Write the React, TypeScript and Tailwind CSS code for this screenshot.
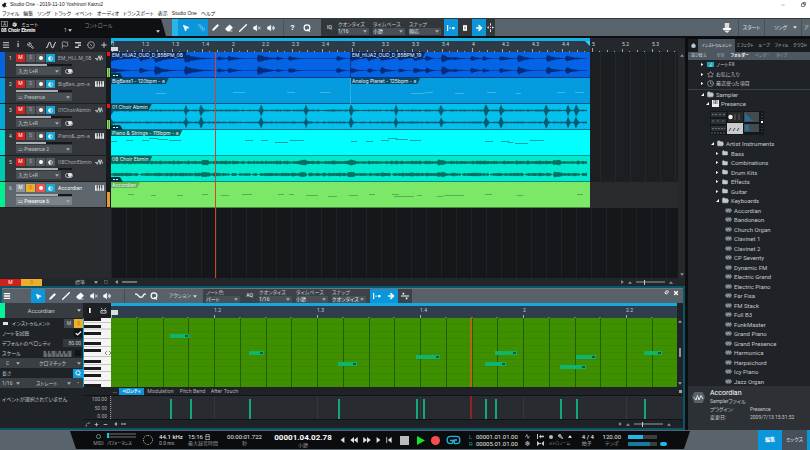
import type { ReactNode } from "react";
import {
  Menu, Wrench, Clock, Plus, MousePointer2, Pencil, Eraser, Slash, VolumeX, Volume2,
  ArrowRight, Home, Star, Folder, FolderOpen, Pin, X, Activity, Flag, Check, Hand,
  SquareStack, CircleSlash, Spline, Minus, Square, Copy, Music2, Settings,
} from "lucide-react";
import clsx from "clsx";

const NOTE_BEAT = 103;
const SONG_WIDTH = 479;

type Wave = "oud" | "choir" | "dense" | "midi";

interface Clip {
  label: string;
  start: number;
}

interface Track {
  name: string;
  input: string;
  audio: boolean;
  level: number;
  strip: string;
  lane: string;
  tag: string;
  ink: string;
  wave: Wave;
  clips: Clip[];
  notes?: number[][];
  meter?: "green" | "orange";
  monitor?: boolean;
  active?: boolean;
}

const TRACKS: Track[] = [
  {
    name: "EM_HIJ..M_08", input: "入力 L+R", audio: true, level: 55, strip: "bg-[#0563e0]", lane: "bg-[#0563e6]", tag: "bg-[#08265f]",
    ink: "#062c78", wave: "oud", meter: "green", monitor: true,
    clips: [{ label: "EM_HIJAZ_OUD_D_85BPM_08", start: 0 }, { label: "EM_HIJAZ_OUD_D_85BPM_19", start: 240 }],
  },
  {
    name: "BigBas..pm-a", input: "Presence", audio: false, level: 75, strip: "bg-[#039adf]", lane: "bg-[#049bdf]", tag: "bg-[#064a68]",
    ink: "#3fb6e6", wave: "midi", monitor: true,
    clips: [{ label: "BigBass1 - 120bpm - a", start: 0 }, { label: "Analog Planet - 125bpm - a", start: 240 }],
    notes: [[45, 16, 10], [122, 15, 12], [176, 15, 8], [209, 15, 10], [300, 16, 14], [314, 15, 8], [344, 16, 9], [376, 15, 9], [405, 16, 5], [446, 15, 8], [464, 15, 9]],
  },
  {
    name: "01ChoirAbmin", input: "入力 L+R", audio: true, level: 62, strip: "bg-[#05a8d8]", lane: "bg-[#04c0ec]", tag: "bg-[#074a5c]",
    ink: "#075a70", wave: "choir", meter: "green", monitor: true,
    clips: [{ label: "01 Choir Abmin", start: 0 }],
  },
  {
    name: "Piano&..pm-a", input: "Presence 2", audio: false, level: 54, strip: "bg-[#00d8d0]", lane: "bg-[#00ffff]", tag: "bg-[#07696c]",
    ink: "#10a0a2", wave: "midi", monitor: true,
    clips: [{ label: "Piano & Strings - 115bpm - a", start: 0 }],
    notes: [[0, 12, 6], [15, 11, 7], [31, 11, 7], [38, 9, 9], [47, 10, 10], [58, 11, 12], [134, 11, 8], [150, 11, 7], [164, 13, 13], [179, 11, 14], [240, 12, 6], [255, 12, 7], [270, 11, 8], [277, 9, 9], [285, 10, 12], [299, 11, 11], [374, 12, 8], [390, 12, 8], [397, 13, 5], [404, 14, 13], [419, 11, 14]],
  },
  {
    name: "08ChoirEbmin", input: "入力 L+R", audio: true, level: 75, strip: "bg-[#00c8ae]", lane: "bg-[#00ead0]", tag: "bg-[#07695e]",
    ink: "#07705f", wave: "dense",
    clips: [{ label: "08 Choir Ebmin", start: 0 }],
  },
  {
    name: "Accordian", input: "Presence 6", audio: false, level: 75, strip: "bg-[#00f090]", lane: "bg-[#7be868]", tag: "bg-[#62b556]",
    ink: "#58ad50", wave: "midi", meter: "orange", active: true, monitor: true,
    clips: [{ label: "Accordian", start: 0 }],
    notes: [[17, 13, 6], [40, 14, 5], [66, 14, 6], [91, 13, 6], [110, 14, 8], [131, 13, 10], [167, 13, 6], [178, 13, 5], [195, 14, 12], [217, 15, 9], [238, 14, 9], [258, 13, 6], [281, 13, 7], [283, 15, 20], [306, 14, 5], [326, 15, 6], [333, 14, 20], [374, 13, 7], [406, 14, 6], [466, 13, 6]],
  },
];

const OUD_HITS = [[0, 3.5, 9], [30, 4, 4], [45, 5, 8], [75, 5, 10], [108, 2.5, 5], [118, 3, 7], [148, 5, 8], [167, 2, 4], [179, 3, 6], [227, 3, 4], [241, 3, 6], [258, 3, 4], [271, 3.5, 6], [289, 2.5, 4], [304, 3, 6], [316, 3, 4], [332, 5, 6], [344, 2, 6], [361, 3, 5], [373, 2.5, 4], [390, 3, 6], [408, 4.5, 6], [437, 4, 7], [456, 4, 7]];
const CHOIR_HITS = [[0, 7, 1.5], [75, 10, 1], [90, 10, 1.4], [150, 10, 1.2], [195, 10, 1], [240, 10, 1.2], [285, 10, 1], [330, 8, 1.4], [375, 10, 1.4], [390, 10, 1.4], [435, 10, 1.4], [457, 10, 1.2], [465, 10, 1.4]];

function noise(x: number, seed: number) {
  const v = Math.sin(x * 12.9898 + seed * 78.233) * 43758.5453;
  return v - Math.floor(v);
}

function amplitude(wave: Wave, x: number, seed: number) {
  const n = noise(x, seed);
  if (wave === "dense") {
    const swell = [94, 192, 240, 330, 446].some((s) => Math.abs(x - s) < 4) ? 1 : 0;
    const gap = seed === 2 && noise(Math.floor(x / 7), 9) < 0.25 && x % 7 < 2;
    return gap ? 0.3 : 0.8 + n * 1.1 + swell;
  }
  const hits = wave === "oud" ? OUD_HITS : CHOIR_HITS;
  let amp = wave === "oud" ? 0.3 : 0.5 + n * 0.5;
  for (const [at, peak, decay] of hits) {
    const d = x - at;
    if (d >= -1 && d < decay * 3) amp = Math.max(amp, peak * Math.exp(-Math.abs(d) / decay) * (0.6 + n * 0.4));
  }
  return Math.min(amp, 6);
}

function wavePath(wave: Wave, mid: number, seed: number) {
  const top: string[] = [];
  const bottom: string[] = [];
  for (let x = 0; x <= SONG_WIDTH - 3; x++) {
    const a = amplitude(wave, x, seed);
    top.push(`${x},${(mid - a).toFixed(1)}`);
    bottom.unshift(`${x},${(mid + a).toFixed(1)}`);
  }
  return `M${top.join("L")}L${bottom.join("L")}Z`;
}

function Caret({ className }: { className?: string }) {
  return (
    <svg viewBox="0 0 6 4" className={clsx("h-[3px] w-[4px] shrink-0 fill-current", className)} aria-hidden>
      <path d="M0 0h6L3 4z" />
    </svg>
  );
}

function QuantizeIcon({ className = "size-[8px]" }: { className?: string }) {
  return (
    <svg viewBox="0 0 10 10" className={className} fill="none" stroke="currentColor" strokeWidth="1.500" aria-hidden>
      <circle cx="5" cy="4.800" r="3.600" />
      <path d="M5.500 6.500L8.500 9.500" />
    </svg>
  );
}

function Picker({ label, options, className }: { label: string; options: string[]; className?: string }) {
  return (
    <span className={clsx("flex min-w-0 items-center", className)}>
      <select aria-label={label} className="h-[7px] min-w-0 flex-1 appearance-none truncate bg-transparent leading-[7px] outline-none">
        {options.map((o) => <option key={o}>{o}</option>)}
      </select>
      <Caret className="mr-[2px] text-[#a9b0b5]" />
    </span>
  );
}

function LabeledPicker({ title, value, className }: { title: string; value: string; className?: string }) {
  return (
    <div className={clsx("flex shrink-0 flex-col justify-center text-[5px] leading-[7px] text-[#c3c8cc]", className)}>
      <span className="whitespace-nowrap">{title}</span>
      <Picker label={title} options={[value]} className="bg-[#4a5056] text-[#dde1e4]" />
    </div>
  );
}

function Tool({ label, active, className, children }: { label: string; active?: boolean; className?: string; children: ReactNode }) {
  return (
    <button aria-label={label} className={clsx("flex h-full shrink-0 items-center justify-center text-white", active && "bg-[#0b96dc]", className)}>
      {children}
    </button>
  );
}

function SnapIcon() {
  return (
    <svg viewBox="0 0 8 6" className="h-[6px] w-[8px] fill-white" aria-hidden>
      <path d="M0 0h1.200v6H0zM2.500 2.500h1.200v1.200H2.500zM5 2h2.500v2.200H5z" />
    </svg>
  );
}

function WindowHeader() {
  const items = ["ファイル", "編集", "ソング", "トラック", "イベント", "オーディオ", "トランスポート", "表示", "Studio One", "ヘルプ"];
  return (
    <header className="h-[18px] bg-white font-['Liberation_Sans','Noto_Sans_CJK_JP',sans-serif] text-[5px] leading-[9px] text-[#222]">
      <div className="flex h-[9px] items-center gap-[3px] pl-px">
        <svg viewBox="0 0 12 12" className="size-[6px]" aria-hidden><path d="M1 3l3 2 3-4 4 2-2 3 3 4-4-1-2 3-2-4-3 1 2-3z" fill="#111" /></svg>
        <h1>Studio One - 2019-11-10 Yoshinori Kaizu2</h1>
        <div className="ml-auto flex gap-[16px] pr-[4px]">
          <button aria-label="最小化" className="w-[4px]"><Minus size={4} /></button>
          <button aria-label="元に戻す"><Copy size={5} strokeWidth={3} className="-scale-x-100" /></button>
        </div>
      </div>
      <nav className="flex h-[9px] items-center gap-[4px] pl-[2px]">
        {items.map((m) => <button key={m} className="whitespace-nowrap">{m}</button>)}
      </nav>
    </header>
  );
}

function MainToolbar() {
  return (
    <div className="flex h-[18px] items-stretch overflow-hidden border-t border-[#33383c] bg-[#5a646c]">
      <div className="flex w-[166px] shrink-0 bg-[#0e1013] text-[5px] text-[#d5d8da] [clip-path:polygon(0_0,97%_0,100%_100%,0_100%)]">
        <div className="w-[64px] pl-px pt-[2px] leading-[6px]">
          <div className="flex items-center gap-[4px]">
            <span className="border border-[#777] px-px leading-[4px]">A</span><Hand size={5} fill="currentColor" />ミュート
          </div>
          <div className="truncate font-bold text-white">08 Choir Ebmin</div>
        </div>
        <div className="flex items-end gap-px pb-[2px] leading-[7px]">1<Caret className="mb-[2px]" /></div>
        <span className="pl-[13px] pt-[2px] leading-[8px] text-[#8b9095]">コントロール</span>
        <Caret className="ml-auto mr-[6px] mt-[11px]" />
      </div>
      <div className="ml-[6px] flex">
        <span className="w-[6px] bg-[#29b4ea]" />
        <Tool label="矢印" active className="w-[16px]"><MousePointer2 size={8} fill="white" className="-scale-100 rotate-180" /></Tool>
        <Tool label="範囲" active className="w-[14px]"><SquareStack size={7} className="text-[#9bd6f2]" /></Tool>
        <Tool label="ペイント" className="w-[14px]"><Pencil size={7} fill="white" /></Tool>
        <Tool label="消しゴム" className="w-[14px]"><Eraser size={8} fill="white" /></Tool>
        <Tool label="直線" className="w-[14px]"><Slash size={8} strokeWidth={4} /></Tool>
        <Tool label="ミュート" className="w-[14px]"><VolumeX size={8} fill="white" /></Tool>
        <Tool label="試聴" className="w-[14px]"><Volume2 size={8} fill="white" /></Tool>
      </div>
      <div className="ml-[5px] flex border-l border-[#4b545b]">
        <Tool label="ヘルプ" className="w-[17px] text-[8px] font-bold">?</Tool>
        <Tool label="検索" className="w-[12px]"><QuantizeIcon /></Tool>
      </div>
      <div className="ml-[8px] flex shrink-0 bg-[#32373c]">
        <Tool label="IQ" className="w-[17px] text-[5px] text-[#d0d4d7]">IQ</Tool>
        <LabeledPicker title="クオンタイズ" value="1/16" className="mr-[4px] w-[31px]" />
        <LabeledPicker title="タイムベース" value="小節" className="mr-[4px] w-[32px]" />
        <LabeledPicker title="スナップ" value="順応" className="w-[32px]" />
        <Tool label="スナップ切替" active className="ml-[3px] w-[14px]"><SnapIcon /></Tool>
        <Tool label="カーソル" className="w-[14px]"><svg viewBox="0 0 5 7" className="h-[6px] w-[4px]"><path d="M0 0h5v7H0z" fill="white" /><path d="M2 2h1v3H2z" fill="#32373c" /></svg></Tool>
        <Tool label="自動スクロール" active className="w-[14px]"><ArrowRight size={8} strokeWidth={5} /></Tool>
        <Tool label="分割" className="w-[9px]">
          <svg viewBox="0 0 8 10" className="h-[9px] w-[7px] fill-white"><path d="M3.500 0h1v3h-1zM3.500 7h1v3h-1zM3.500 4.500h1v1h-1zM0 5l2-1.500v3zM8 5l-2-1.500v3z" /></svg>
        </Tool>
      </div>
      <div className="ml-auto flex items-stretch text-[5px] leading-[17px] text-[#dfe3e6]">
        <button aria-label="ダウンロード" className="px-[6px]">
          <svg viewBox="0 0 18 18" className="size-[10px]"><path d="M5 0h8v9H5z" fill="#ddd" /><path d="M1 9h16l-2 4H3z" fill="white" /><path d="M4 14h10l-5 4z" fill="#e5e8ea" /></svg>
        </button>
        <button className="w-[26px] border-l border-[#495158]">スタート</button>
        <button className="flex w-[37px] items-center justify-between border-l border-[#495158] pl-[9px] pr-[4px]">ソング<Caret /></button>
        <button className="w-[9px] border-l border-[#495158] pl-[2px] text-left">ア</button>
      </div>
    </div>
  );
}

function Ruler() {
  const beats = Array.from({ length: 19 }, (_, i) => i);
  return (
    <div className="relative flex min-w-0 flex-1 overflow-hidden bg-[#24272b] text-[5px] leading-[5px] text-[#d5dade]">
      <div className="absolute inset-y-0 left-0 w-[479px] border-t-[3px] border-[#13b3e6] bg-[#2d3b48]" />
      {beats.map((b) => {
        const bar = Math.floor(b / 4) + 1;
        const inBar = b % 4;
        return (
          <div key={b} className="relative flex w-[30px] shrink-0 flex-col justify-between pl-px pt-[4px]">
            <span>{inBar ? `${bar}.${inBar + 1}` : bar}</span>
            <svg viewBox="0 0 29 4" className="h-[4px] w-[29px]" aria-hidden>
              <path d={`M.5 ${inBar ? 1 : 0}V4M7.500 3V4M15.500 2V4M22.500 3V4`} stroke="#9ba5ad" />
            </svg>
          </div>
        );
      })}
      <svg viewBox="0 0 479 14" className="absolute left-0 top-0 h-[14px] w-[479px]" aria-hidden>
        <path d="M0 3h3l-3 4zM479 3h-5l5 5z" fill="#26d4ff" />
        <path d="M0 9h7v4H0z" fill="#d8dde0" />
      </svg>
    </div>
  );
}

function TrackHeader({ track, index }: { track: Track; index: number }) {
  const cell = "flex h-[8px] w-[9px] items-center justify-center";
  return (
    <div className={clsx("flex w-[111px] shrink-0 border-b border-[#1c1e20] text-[5px]", track.active ? "bg-[#5d656d]" : "bg-[#33373b]")}>
      <span className={clsx("w-[5px]", track.strip)} />
      <span className="w-[11px] pt-[2px] text-center leading-[8px] text-[#d8dadc]">{index + 1}</span>
      <div className="flex w-[90px] flex-col justify-between py-[2px]">
        <div className="flex items-center gap-px">
          <button aria-label="ミュート" className={clsx(cell, track.active ? "bg-[#8e959b] text-white" : "bg-[#d0231e] text-white")}>M</button>
          <button aria-label="ソロ" className={clsx(cell, track.active ? "bg-[#efae2a] text-[#b67b10]" : "bg-[#55595d] text-[#a5a9ac]")}>S</button>
          <button aria-label="録音待機" className={clsx(cell, track.active ? "bg-[#f0524c]" : "bg-[#55595d]")}><i className="size-[4px] rounded-full bg-white" /></button>
          <button aria-label="モニター" className={clsx(cell, track.monitor ? "bg-[#13a7d4]" : "bg-[#55595d]")}>
            <svg viewBox="0 0 6 6" className="size-[5px]"><circle cx="3" cy="3" r="2.400" fill="none" stroke="white" strokeWidth=".7" /><path d="M3 .6a2.400 2.400 0 0 0 0 4.800z" fill="white" /></svg>
          </button>
          <span className={clsx("ml-[2px] w-[36px] whitespace-nowrap font-['Inter',sans-serif] leading-[8px]", track.active ? "text-white" : "text-[#a8acaf]")}>{track.name}</span>
          {track.audio ? (
            <svg viewBox="0 0 14 10" className="h-[6px] w-[8px] shrink-0" fill="none" stroke="#d0d3d5" strokeWidth="1.600"><path d="M0 7l2-2 2 4 3-8 2 8 2-8 2 7" /></svg>
          ) : (
            <svg viewBox="0 0 16 10" className="h-[6px] w-[9px] shrink-0"><path d="M0 0h16v10H0z" fill="#e4e6e8" /><path d="M3 0h2v6H3zM7 0h2v6H7zM11 0h2v6h-2z" fill="#33373b" /><path d="M4 6v4M8 6v4M12 6v4" stroke="#33373b" /></svg>
          )}
        </div>
        <input
          type="range" aria-label={`${track.name} 音量`} defaultValue={track.level}
          className="h-[2px] w-[56px] appearance-none [&::-webkit-slider-thumb]:size-0 [&::-webkit-slider-thumb]:appearance-none"
          style={{ background: `linear-gradient(90deg, #a8adb0 ${track.level}%, #15171a ${track.level}%)` }}
        />
        <div className="flex items-center gap-[4px]">
          <Picker
            label={`${track.name} 入力`}
            options={[track.audio ? track.input : `▭ ${track.input}`]}
            className={clsx("h-[8px] pl-[2px]", track.audio ? "w-[45px]" : "w-[56px]", track.active ? "bg-[#7c848b] text-white" : "bg-[#4a4f54] text-[#bfc3c6]")}
          />
          {track.audio && <button aria-label="ステレオ" className="flex h-[5px] w-[8px] items-center justify-end rounded-full border border-[#b5b8ba]"><i className="size-[4px] rounded-full bg-[#e5e7e9]" /></button>}
        </div>
      </div>
      <div className="flex w-[5px] flex-col justify-between bg-[#181b1e] px-px">
        <span className={clsx("h-[4px]", track.meter === "green" && "bg-[#ee1512]")} />
        {track.meter === "green" && <span className="h-[9px] border-x border-[#8ae056] bg-[#55a23a]" />}
        {track.meter === "orange" && <span className="h-[15px] bg-[#ea9a2e]" />}
      </div>
    </div>
  );
}

function TrackLane({ track }: { track: Track }) {
  return (
    <div className={clsx("min-w-0 flex-1 overflow-hidden", track.active && "bg-[#292b2f]")}>
      <div className={clsx("relative h-[26px] w-[479px] border-b border-black/40", track.lane)}>
        <svg viewBox="0 0 479 26" className="absolute inset-0 h-[26px] w-[479px]" aria-hidden>
          {track.wave !== "midi" && (
            <>
              <path d={wavePath(track.wave, 6.5, 1)} fill={track.ink} />
              <path d={wavePath(track.wave, 18.5, 2)} fill={track.ink} />
            </>
          )}
          {track.clips.slice(1).map((c) => <path key={c.start} d={`M${c.start - 0.5} 0v26`} stroke={track.ink} strokeOpacity=".7" />)}
          {track.notes?.map(([x, y, w], i) => <path key={i} d={`M${x} ${y - 0.5}h${w}`} stroke={track.ink} />)}
          {track.audio && <path d="M0 21h9l3 5H0z" fill="#06323f" />}
          {track.audio && <path d="M2 23.500h2m1 0h2" stroke="#cfe" strokeWidth="1" />}
        </svg>
        {track.clips.map((c) => (
          <span
            key={c.start}
            className={clsx("absolute top-0 whitespace-nowrap pl-px pr-[4px] text-[5px] leading-[6px] text-[#e8f6fa] font-['Inter',sans-serif] [clip-path:polygon(0_0,100%_0,calc(100%-3px)_100%,0_100%)]", track.tag)}
            style={{ left: c.start }}
          >
            {c.label}
          </span>
        ))}
      </div>
    </div>
  );
}

function ZoomSlider() {
  return (
    <div className="flex items-center gap-[4px] text-[#8b9095]">
      <svg viewBox="0 0 4 6" className="h-[4px] w-[3px] fill-current"><path d="M0 0l4 3-4 3z" /></svg>
      <Caret className="rotate-180" />
      <input type="range" aria-label="ズーム" defaultValue={30} className="h-[2px] w-[29px] appearance-none bg-[#5b6065] [&::-webkit-slider-thumb]:h-[5px] [&::-webkit-slider-thumb]:w-px [&::-webkit-slider-thumb]:appearance-none [&::-webkit-slider-thumb]:bg-[#c5c9cc]" />
      <Caret className="rotate-180" />
    </div>
  );
}

function Arrangement() {
  return (
    <section className="flex flex-1 flex-col bg-[#1b1e21]">
      <div className="flex h-[14px]">
        <div className="flex w-[111px] shrink-0 items-center bg-[#202327] text-[#c3c8cb]">
          <button aria-label="メニュー" className="flex w-[12px] justify-center"><Menu size={8} strokeWidth={3} /></button>
          <button aria-label="情報" className="flex w-[12px] justify-center text-[8px] font-bold leading-[8px]">i</button>
          <button aria-label="設定" className="flex w-[13px] justify-center"><Wrench size={7} strokeWidth={3} className="-scale-x-100" /></button>
          <div className="ml-auto flex gap-[5px] pr-[3px]">
            <button aria-label="オートメーション">
              <svg viewBox="0 0 12 8" className="h-[8px] w-[11px]" fill="none" stroke="currentColor" strokeWidth="1.200"><path d="M1 7c3 0 2-6 4-6s1 6 3 6 2-6 4-6" /></svg>
            </button>
            <button aria-label="マーカー"><Flag size={8} /></button>
            <button aria-label="アレンジ">
              <svg viewBox="0 0 8 8" className="size-[8px] fill-current"><path d="M1 1h6v1.500H1zM4 3.500h3V5H4zM1 5.500h4V7H1z" /></svg>
            </button>
            <button aria-label="テンポ"><CircleSlash size={8} className="-scale-x-100" /></button>
            <button aria-label="トラックを追加"><Plus size={8} strokeWidth={3} /></button>
          </div>
        </div>
        <Ruler />
        <div className="w-[6px] bg-[#24272b]" />
      </div>
      <div className="flex flex-1">
        <div className="relative flex min-w-0 flex-1 flex-col">
          {TRACKS.map((t, i) => (
            <div key={t.name} className="flex h-[26px] bg-[repeating-linear-gradient(90deg,#24272b_0,#24272b_1px,#1b1f22_1px,#1b1f22_15px)]">
              <TrackHeader track={t} index={i} />
              <TrackLane track={t} />
            </div>
          ))}
          <div className="flex flex-1">
            <div className="w-[111px] bg-[#27292d]" />
            <div className="flex-1 bg-[repeating-linear-gradient(90deg,#1e2125_0,#1e2125_1px,#15181b_1px,#15181b_15px)]" />
          </div>
          <div className="absolute inset-y-0 left-[215px] w-px bg-[#d8402c]" />
        </div>
        <div className="flex w-[7px] flex-col items-center justify-between bg-[#26282c] py-[2px] text-[#8b9095]">
          <Caret className="rotate-180" />
          <Caret />
        </div>
      </div>
      <div className="flex h-[8px] items-center bg-[#222529] text-[5px] leading-[8px] text-[#a4a9ad]">
        <button className="h-[7px] w-[21px] bg-[#cf201c] leading-[7px] text-white">M</button>
        <button className="h-[7px] w-[21px] bg-[#eeae2c] leading-[7px] text-[#b67b10]">S</button>
        <Picker label="トラック高さ" options={["標準"]} className="ml-[33px] w-[25px]" />
        <Square size={4} className="ml-[4px]" />
        <svg viewBox="0 0 4 6" className="ml-[7px] h-[4px] w-[3px] fill-current"><path d="M4 0v6L0 3z" /></svg>
        <span className="ml-[4px] h-[2px] w-[15px] bg-[#6d7276]" />
        <div className="ml-auto pr-[12px]"><ZoomSlider /></div>
      </div>
    </section>
  );
}

const NOTES = [[59, 18, 19], [138, 35, 15], [227, 46, 19], [305, 39, 24], [374, 46, 21], [384, 35, 22], [449, 49, 26], [465, 39, 20], [533, 35, 18]];
const VELOCITIES = [59, 79, 138, 227, 305, 312, 374, 384, 449, 465, 533];
const BLACK_KEYS = [0, 7, 14, 24, 31, 42, 49, 56, 66];

function InstrumentPanel() {
  return (
    <aside className="flex w-[83px] shrink-0 flex-col bg-[#1f2226] text-[5px] leading-[9px] text-[#c5c9cc]">
      <div className="flex h-[15px] items-center bg-[#373c41]">
        <span className="h-full w-[5px] bg-[#00f59a]" />
        <select aria-label="インストゥルメント選択" className="min-w-0 flex-1 appearance-none bg-transparent text-center text-[6px] outline-none"><option>Accordian</option></select>
        <Caret className="mr-[2px]" />
      </div>
      <div className="flex h-[10px] items-center pl-[3px]">
        <span className="h-[3px] w-[5px] bg-[#dfe2e4]" /><span className="ml-[4px]">インストゥルメント</span>
        <button className="ml-auto w-[10px] bg-[#43484d]">M</button>
        <button className="w-[9px] bg-[#efb02c] text-[#a8740f]">S</button>
      </div>
      <label className="flex h-[10px] items-center justify-between pl-[2px]">
        ノートを試聴
        <span className="relative mr-px flex size-[8px] items-center justify-center bg-[#121417]">
          <input type="checkbox" defaultChecked className="absolute inset-0 appearance-none" />
          <Check size={7} strokeWidth={4} className="text-white" />
        </span>
      </label>
      <label className="flex h-[10px] items-center justify-between pl-[2px]">
        <span className="whitespace-nowrap">デフォルトのベロシティ</span>
        <input defaultValue="80.00" className="h-[8px] w-[20px] bg-[#33383c] pr-[2px] text-right outline-none" />
      </label>
      <label className="flex h-[10px] items-center pl-[2px]">
        スケール
        <svg viewBox="0 0 32 8" className="ml-auto h-[7px] w-[31px]" aria-hidden>
          <path d="M0 1h32v7H0z" fill="#666b70" />
          <path d="M3 0h2v4H3zM7 0h2v4H7zM15 0h2v4h-2zM20 0h2v4h-2zM25 0h2v4h-2z" fill="#1f2226" />
          <path d="M4.500 4v4M9.500 4v4M14 1v7M18.500 4v4M23 4v4M28 1v7" stroke="#1f2226" strokeWidth=".7" />
        </svg>
        <input type="checkbox" className="mx-[2px] size-[6px] appearance-none bg-[#111316]" />
      </label>
      <div className="flex h-[10px] items-center bg-[#3a3f44] pl-[6px]">
        <Picker label="ルート" options={["C"]} className="w-[16px]" />
        <Picker label="スケール種類" options={["クロマチック"]} className="flex-1 pl-[17px]" />
      </div>
      <div className="flex h-[10px] items-center justify-between pl-[2px]">
        長さ<button aria-label="クオンタイズ長" className="flex h-[9px] w-[10px] items-center justify-center bg-[#0f9cdc] text-white"><QuantizeIcon className="size-[6px]" /></button>
      </div>
      <div className="flex h-[10px] items-center bg-[#3a3f44] pl-[2px]">
        <Picker label="長さ" options={["1/16"]} className="w-[20px]" />
        <Picker label="グリッド" options={["ストレート"]} className="w-[51px] pl-[14px]" />
        <span className="mx-auto">•</span>
      </div>
      <p className="whitespace-nowrap pl-[2px] pt-[7px]">イベントが選択されていません</p>
    </aside>
  );
}

function EditorToolbar() {
  return (
    <div className="flex h-[15px] items-stretch border-t border-[#6c757c] bg-[#58616a]">
      <Tool label="メニュー" className="w-[10px]"><Menu size={8} strokeWidth={4} /></Tool>
      <div className="ml-[19px] flex">
        <Tool label="矢印" active className="w-[14px]"><MousePointer2 size={7} fill="white" /></Tool>
        <Tool label="ペイント" className="w-[14px]"><Pencil size={7} fill="white" /></Tool>
        <Tool label="直線" className="w-[14px]"><Slash size={8} strokeWidth={4} /></Tool>
        <Tool label="消しゴム" className="w-[14px]"><Eraser size={8} fill="white" /></Tool>
        <Tool label="ミュート" className="w-[13px]"><VolumeX size={8} fill="white" /></Tool>
        <Tool label="試聴" className="w-[14px]"><Volume2 size={8} fill="white" /></Tool>
      </div>
      <div className="ml-[10px] flex border-l border-[#454d54] pl-[8px]">
        <Tool label="カーブ" className="w-[14px]"><svg viewBox="0 0 12 6" className="h-[6px] w-[11px]" fill="none" stroke="white" strokeWidth="1.400"><path d="M0 1h2l3 3 1 .5L8 4l2-3h2" /></svg></Tool>
        <Tool label="検索" className="w-[13px]"><QuantizeIcon /></Tool>
        <button className="flex w-[43px] items-center gap-[2px] pl-[9px] text-[5px] text-[#d5d9dc]">アクション<Caret /></button>
      </div>
      <div className="flex bg-[#3c4248] pl-[3px]">
        <LabeledPicker title="ノート色" value="パート" className="w-[34px]" />
        <Tool label="AQ" className="w-[19px] text-[5px] text-[#d0d4d7]">AQ</Tool>
        <LabeledPicker title="クオンタイズ" value="1/16" className="mr-[4px] w-[33px]" />
        <LabeledPicker title="タイムベース" value="小節" className="mr-[4px] w-[32px]" />
        <LabeledPicker title="スナップ" value="クオンタイズ" className="mr-[4px] w-[34px]" />
        <Tool label="スナップ切替" active className="w-[14px]"><SnapIcon /></Tool>
        <Tool label="自動スクロール" active className="w-[14px]"><ArrowRight size={8} strokeWidth={5} /></Tool>
        <Tool label="分割" className="w-[14px]"><svg viewBox="0 0 10 10" className="size-[8px] fill-white"><path d="M0 4.500h10v1H0zM2 1h2v2H2zM6 7h2v2H6z" /></svg></Tool>
      </div>
      <div className="ml-auto flex items-start gap-[4px] pr-[4px] pt-px text-white">
        <button aria-label="固定"><Pin size={5} strokeWidth={4} className="rotate-45" /></button>
        <button aria-label="閉じる"><X size={6} strokeWidth={5} /></button>
      </div>
    </div>
  );
}

function NoteEditor() {
  const labels = ["", "1.2", "1.3", "1.4", "2", "2.2"];
  const quarter = Array.from({ length: 22 }, (_, i) => Math.round(((i + 1) * NOTE_BEAT) / 4));
  return (
    <section className="border-2 border-[#0a5668] bg-[#1e2125]">
      <EditorToolbar />
      <div className="-ml-[2px] flex">
        <InstrumentPanel />
        <div className="flex min-w-0 flex-1 flex-col">
          <div className="flex h-[15px]">
            <div className="flex w-[28px] items-center justify-around bg-[#1d2024] text-[#c9cdd0]">
              <svg viewBox="0 0 4 6" className="h-[5px] w-[4px]"><path d="M0 0h2v6H0z" fill="#111" /><path d="M2 0h2v6H2z" fill="white" /></svg>
              <svg viewBox="0 0 8 8" className="size-[7px]" fill="none" stroke="currentColor"><path d="M1 4h6v3H1zM1 1l2 2M7 1L5 3M2.500 5v1M5.500 5v1" /></svg>
            </div>
            <div className="flex min-w-0 flex-1 overflow-hidden border-t-[3px] border-[#16a9de] bg-[#303d4d] text-[5px] text-[#c9d0d6]">
              {labels.map((l, i) => (
                <div key={i} className="relative flex w-[103px] shrink-0 flex-col justify-between pt-[2px] leading-[5px]">
                  <span>{l || "\u00a0"}</span>
                  {i === 0 && <i className="absolute left-0 top-[4px] h-[5px] w-[7px] bg-[#d8dde0]" />}
                  <svg viewBox="0 0 103 4" className="h-[4px] w-[103px]"><path d="M.5 1V4M26 3V4M52 3V4M77 3V4" stroke="#a4aeb6" /></svg>
                </div>
              ))}
            </div>
            <div className="w-[6px]" />
          </div>
          <div className="flex h-[69px]">
            <svg viewBox="0 0 28 69" className="h-[69px] w-[28px] shrink-0" aria-label="鍵盤">
              <path d="M0 0h28v69H0z" fill="#f4f4f4" />
              <path d="M0 0h1v69H0z" fill="#16a9de" />
              <path d="M1 4.500h27M1 11h27M1 20.500h27M1 28.500h27M1 38.500h27M1 46.500h27M1 53.500h27M1 62.500h27" stroke="#a5a5a5" strokeWidth=".6" />
              {BLACK_KEYS.map((y) => <path key={y} d={`M1 ${y}h17v3H1z`} fill="#1b1b1b" />)}
              <path d="M24 33l-2 2 2 2M26 33l2 2-2 2" fill="none" stroke="#555" strokeWidth=".7" />
            </svg>
            <div className="relative min-w-0 flex-1 overflow-hidden bg-[#3f9000]">
              <div className="absolute inset-0 bg-[repeating-linear-gradient(180deg,transparent_0,transparent_6px,rgba(0,0,0,0.06)_6px,rgba(0,0,0,0.06)_7px)]" />
              <svg viewBox="0 0 567 69" className="absolute left-0 top-0 h-[69px] w-[567px]">
                {quarter.map((x) => <path key={x} d={`M${x + 0.5} 0v69`} stroke="#245c06" />)}
                {NOTES.map(([x, y, w]) => (
                  <g key={x}>
                    <path d={`M${x} ${y - 2}h${w}v4h-${w}z`} fill="#0eb56c" />
                    <path d={`M${x + w - 4} ${y - 1}h3v2h-3z`} fill="#0a5e46" />
                  </g>
                ))}
                <path d="M360 0v69" stroke="#b8660f" strokeWidth="2" />
              </svg>
            </div>
            <div className="flex w-[6px] flex-col items-center justify-between bg-[#202327] py-[2px] text-[#9ba0a4]">
              <Caret className="rotate-180" /><span className="h-[9px] w-[2px] bg-[#8f9498]" /><Caret />
            </div>
          </div>
          <div className="flex h-[8px] items-center bg-[#1f2226] font-['Inter','Noto_Sans_CJK_JP',sans-serif] text-[5px] leading-[7px] text-[#b3b8bb]">
            <span className="w-[34px] text-right leading-[4px]">...</span>
            <button className="ml-[2px] h-[7px] w-[25px] bg-[#0f93d4] text-[4px] font-bold text-white">ベロシティ</button>
            <button className="w-[33px]">Modulation</button>
            <button className="w-[31px]">Pitch Bend</button>
            <button className="w-[33px]">After Touch</button>
            <span className="ml-auto mr-px size-[3px] bg-[#9ba0a4]" />
          </div>
          <div className="flex h-[25px] border-y border-[#111316]">
            <div className="flex w-[28px] flex-col justify-between border-r border-dotted border-[#9a9fa3] bg-[#1f2226] pr-[3px] text-right text-[5px] leading-[6px] text-[#a6abaf]">
              <span>100.00</span><span>50.00</span><span>0.00</span>
            </div>
            <div className="min-w-0 flex-1 overflow-hidden bg-[#282b30]">
              <svg viewBox="0 0 567 23" className="h-[23px] w-[567px]">
                {labels.map((_, i) => <path key={i} d={`M${i * NOTE_BEAT + 0.5} 0v23`} stroke="#34383c" />)}
                {VELOCITIES.map((x) => <path key={x} d={`M${x} 3h2v20h-2z`} fill="#14a77a" />)}
                <path d="M360 0v23" stroke="#8f2428" strokeWidth="2" />
              </svg>
            </div>
          </div>
          <div className="flex h-[8px] items-center text-[#b3b8bb]">
            <Spline size={5} className="ml-[2px]" />
            <Plus size={5} strokeWidth={4} className="ml-[4px]" />
            <Minus size={5} strokeWidth={4} className="ml-[4px]" />
            <svg viewBox="0 0 4 6" className="ml-[6px] h-[4px] w-[3px] fill-current"><path d="M4 0v6L0 3z" /></svg>
            <span className="ml-[4px] h-[2px] w-[5px] bg-[#6d7276]" />
            <div className="ml-auto pr-[12px]"><ZoomSlider /></div>
          </div>
        </div>
      </div>
    </section>
  );
}

const FOLDERS = ["Bass", "Combinations", "Drum Kits", "Effects", "Guitar"];
const KEYBOARDS = ["Accordian", "Bandoneon", "Church Organ", "Clavinet 1", "Clavinet 2", "CP Seventy", "Dynamic FM", "Electric Grand", "Electric Piano", "Far Fisa", "FM Stack", "Full B3", "FunkMaster", "Grand Piano", "Grand Presence", "Harmonica", "Harpsichord", "Icy Piano", "Jazz Organ"];

function TreeRow({ icon, label, indent, open, japanese }: { icon: ReactNode; label: string; indent: string; open?: boolean; japanese?: boolean }) {
  return (
    <li className={clsx("flex min-h-0 flex-1 items-center", indent)}>
      {open !== undefined && (
        <svg viewBox="0 0 4 4" className="mr-[3px] size-[3px] shrink-0 fill-white"><path d={open ? "M4 0v4H0z" : "M0 0l3 2-3 2z"} /></svg>
      )}
      {icon}
      <button className={clsx("ml-[2px] whitespace-nowrap leading-[7px]", japanese ? "text-[5px]" : "text-[6px]")}>{label}</button>
    </li>
  );
}

function Browser() {
  return (
    <aside className="flex w-[122px] shrink-0 flex-col bg-[#1f2226] text-[5px] text-[#c4c8cb]">
      <div className="flex h-[14px] items-stretch whitespace-nowrap border-t border-[#0a0b0c] bg-[#1a1d20] text-[4px]">
        <button aria-label="ホーム" className="flex w-[10px] items-center justify-center"><Home size={5} fill="currentColor" /></button>
        <button className="w-[37px] shrink-0 bg-[#4e575f] text-[#e4e7e9]">インストゥルメント</button>
        <button className="w-[20px] shrink-0">エフェクト</button>
        <button className="w-[18px] shrink-0">ループ</button>
        <button className="w-[17px] shrink-0">ファイル</button>
        <button className="w-[20px] shrink-0">クラウド</button>
      </div>
      <div className="flex h-[8px] items-center gap-[6px] whitespace-nowrap bg-[#4e575f] pl-[3px] text-[4px] leading-[8px] text-[#9aa2a8]">
        <span className="mr-[4px] text-[#d5d8db]">並び替え</span>
        <button>全体</button><button className="font-bold text-white">フォルダー</button><button>ベンダー</button><button>タイプ</button>
      </div>
      <ul className="flex flex-1 flex-col">
        <TreeRow japanese indent="pl-[13px]" open={false} label="ノートFX" icon={<span className="flex h-[5px] w-[7px] items-center justify-center bg-[#1ba7b8] text-white"><Music2 size={4} /></span>} />
        <TreeRow japanese indent="pl-[13px]" open={false} label="お気に入り" icon={<Star size={7} />} />
        <TreeRow japanese indent="pl-[13px]" open={false} label="最近使った項目" icon={<Clock size={7} />} />
        <li className="border-t border-[#3a3f43]" />
        <TreeRow indent="pl-[13px]" open label="Sampler" icon={<FolderOpen size={7} fill="currentColor" />} />
        <TreeRow indent="pl-[18px]" open label="Presence" icon={
          <svg viewBox="0 0 7 7" className="size-[7px]"><path d="M0 0h7v7H0z" fill="#eee" /><path d="M2 0v4M3.500 0v4M5 0v4" stroke="#555" strokeWidth=".8" /></svg>
        } />
        <li className="min-h-0 flex-[3] pl-[22px] pt-[2px]">
          <svg viewBox="0 0 54 24" className="h-[24px] w-[54px]" aria-label="Presence">
            <path d="M0 0h54v24H0z" fill="#15181a" />
            <path d="M1 1h15v5H1zM1 8h15v5H1zM1 15h15v5H1z" fill="#2b3033" />
            <path d="M2 3.500h5m2 0h2m2 0h2M2 10h3m2 0h3m2 0h3M2 17.500h13M1 22h15" stroke="#858b8f" strokeDasharray="2 1" strokeWidth=".7" />
            <path d="M18 1h15v10H18z" fill="#262a2d" /><circle cx="20.500" cy="6" r="2.200" fill="#f0f2f3" /><path d="M25 3v6M29 3v6" stroke="#4a4036" strokeWidth="2" />
            <path d="M17 12h16v11H17z" fill="#c9cbcc" /><path d="M19 20l2-3M23 20l2-3M27 20l2-3" stroke="#444" />
            <path d="M34 1h15v10H34zM34 13h15v8H34z" fill="#444b50" /><path d="M35 2v8h10c-4 0-7-5-10-8zM35 14h4v6h-4z" fill="#2a6c99" />
            <path d="M52 2v20" stroke="#555" strokeDasharray="1 2" /><path d="M51 10h2v2h-2z" fill="white" />
          </svg>
        </li>
        <TreeRow indent="pl-[23px]" open label="Artist Instruments" icon={<FolderOpen size={7} fill="currentColor" />} />
        {FOLDERS.map((f) => <TreeRow key={f} indent="pl-[28px]" open={false} label={f} icon={<Folder size={6} fill="currentColor" className="mr-px" />} />)}
        <TreeRow indent="pl-[28px]" open label="Keyboards" icon={<FolderOpen size={7} fill="currentColor" />} />
        {KEYBOARDS.map((k) => (
          <TreeRow key={k} indent="pl-[37px]" label={k} icon={
            <svg viewBox="0 0 12 8" className="h-[5px] w-[7px]"><path d="M2 0h8l2 4-2 4H2L0 4z" fill="#626c73" /><path d="M1 4l2-2 1 4 2-4 2 4 1-4 2 2" fill="none" stroke="#c5ccd0" strokeWidth=".8" /></svg>
          } />
        ))}
      </ul>
      <div className="flex h-[44px] gap-[5px] bg-[#2d3135] pl-[4px] pt-[3px]">
        <svg viewBox="0 0 26 26" className="mt-[2px] size-[13px]" aria-hidden><path d="M5 2h16l5 10-5 12H5L0 12z" fill="#59636c" /><path d="M4 13l4 5 3-9 3 9 4-9 4 7" fill="none" stroke="#e5e8ea" strokeWidth="2" /></svg>
        <div className="leading-[8px]">
          <h2 className="text-[7px] leading-[8px] text-white">Accordian</h2>
          <p>Samplerファイル</p>
          <dl className="grid grid-cols-[40px_auto] leading-[8px]">
            <dt>プラグイン:</dt><dd>Presence</dd>
            <dt>変更日:</dt><dd className="whitespace-nowrap">2009/7/13 15:31:52</dd>
          </dl>
        </div>
      </div>
    </aside>
  );
}

function Readout({ value, unit, className }: { value: string; unit: string; className?: string }) {
  return (
    <div className={clsx("flex shrink-0 flex-col whitespace-nowrap leading-[7px]", className)}>
      <span className="text-[6px] text-[#e3e6e8]">{value}</span>
      <span className="text-[#8f9599]">{unit}</span>
    </div>
  );
}

const LOCATE_BUTTONS = [
  { label: "前へ", width: "w-[5px]", box: "0 0 5 8", d: "M5 0v8L0 4z" },
  { label: "早戻し", width: "w-[8px]", box: "0 0 10 8", d: "M5 0v8L0 4zM10 0v8L5 4z" },
  { label: "早送り", width: "w-[8px]", box: "0 0 10 8", d: "M0 0l5 4-5 4zM5 0l5 4-5 4z" },
  { label: "次へ", width: "w-[5px]", box: "0 0 5 8", d: "M0 0l5 4-5 4z" },
  { label: "先頭へ", width: "w-[6px]", box: "0 0 7 8", d: "M0 0h1v8H0zM7 0v8L2 4z" },
];

function Transport() {
  return (
    <footer className="flex h-[20px] items-stretch bg-[#59636b] text-[5px]">
      <div className="ml-[70px] mt-px flex h-[18px] flex-1 items-center bg-[#0b0c0e] pl-[20px] pr-[23px] text-[#c4c8cb] [clip-path:polygon(0_0,100%_0,calc(100%-6px)_100%,6px_100%)]">
        <div className="flex w-[17px] shrink-0 flex-col items-center leading-[7px] text-[#8f9599]"><i className="mb-px size-[5px] rounded-full border border-[#6b8791]" />MIDI</div>
        <div className="flex w-[29px] shrink-0 flex-col gap-[2px] leading-[7px]">
          <div className="border-l-2 border-[#19c4e0]"><div className="h-[2px] bg-[#3b4043]" /><div className="mt-px h-[2px] bg-[#3b4043]" /></div>
          <span className="whitespace-nowrap text-[4px]">パフォーマンス</span>
        </div>
        <i className="ml-[7px] size-[10px] shrink-0 rounded-full border border-dotted border-[#c4c8cb]" />
        <Readout value="44.1 kHz" unit="0.0 ms" className="ml-[6px] w-[24px] font-medium" />
        <Readout value="15:16 日" unit="最大録音時間" className="ml-[5px] w-[32px]" />
        <Readout value="00:00:01.722" unit="秒" className="ml-[7px] w-[35px] text-center" />
        <div className="ml-[11px] w-[60px] shrink-0 text-center leading-[6px] text-[#8f9599]">
          <div className="text-[8px] font-bold leading-[9px] text-white">00001.04.02.78</div>小節
        </div>
        <div className="ml-[7px] flex shrink-0 items-center gap-[5px] text-[#dfe2e4]">
          {LOCATE_BUTTONS.map((b) => (
            <button key={b.label} aria-label={b.label}>
              <svg viewBox={b.box} className={clsx("h-[6px] fill-current", b.width)}><path d={b.d} /></svg>
            </button>
          ))}
        </div>
        <div className="ml-[8px] flex shrink-0 items-center gap-[6px]">
          <button aria-label="停止" className="mr-[2px] size-[9px] bg-[#b9bcbe]" />
          <button aria-label="再生"><svg viewBox="0 0 8 9" className="h-[9px] w-[8px]"><path d="M0 0l8 4.500L0 9z" fill="#12e62c" /></svg></button>
          <button aria-label="録音" className="size-[9px] rounded-full bg-[#f4504e]" />
          <button aria-label="ループ"><svg viewBox="0 0 16 11" className="h-[10px] w-[15px]" fill="none" stroke="#1fb5da" strokeWidth="1.500"><path d="M5 9.500C2 9.500 1 8 1 5.500S2.500 1.500 5 1.500h6c2.500 0 4 1.500 4 4s-1 4-4 4H9V5.500h3M4 6h3.500c0 2-1 3.500-2.500 3.500" /></svg></button>
        </div>
        <dl className="ml-[8px] grid shrink-0 grid-cols-[7px_auto] text-[6px] leading-[7px] text-[#e3e6e8]">
          <dt className="text-[#1a96a6]">L</dt><dd>00001.01.01.00</dd>
          <dt className="text-[#1a96a6]">R</dt><dd>00005.01.01.00</dd>
        </dl>
        <div className="ml-[7px] grid shrink-0 grid-cols-[12px_12px] items-center gap-y-[2px]">
          <Activity size={5} strokeWidth={3} />
          <svg viewBox="0 0 7 5" className="h-[5px] w-[7px] fill-current"><path d="M0 0h1v5H0zM2 2.500l2-2v1.300h3v1.400H4v1.300z" /></svg>
          <Settings size={5} strokeWidth={4} />
          <svg viewBox="0 0 7 5" className="h-[5px] w-[7px] fill-current"><path d="M0 0l3 2.500L0 5zM7 0L4 2.500 7 5zM2 2h3v1H2z" /></svg>
        </div>
        <div className="flex w-[26px] shrink-0 flex-col leading-[7px] text-[#8f9599]">
          <div className="flex h-[7px] items-center gap-[5px] text-white"><i className="size-[4px] rounded-full bg-[#bbb]" /><Wrench size={5} strokeWidth={4} className="-scale-x-100" /><Caret className="rotate-180" /></div>
          <span className="whitespace-nowrap text-[4px]">メトロノーム</span>
        </div>
        <Readout value="4 / 4" unit="拍子" className="ml-[7px] w-[16px] font-medium" />
        <Readout value="120.00" unit="テンポ" className="ml-[4px] w-[20px] text-center" />
        <div className="ml-auto flex flex-col gap-[3px]">
          <div className="flex h-[4px] w-[29px] bg-[#3a3e41]"><i className="w-1/2 bg-[#20b8e6]" /></div>
          <div className="flex h-[4px] w-[29px] bg-[#3a3e41]"><i className="w-3/4 bg-[#187a9c]" /></div>
        </div>
        <i className="ml-[3px] mt-[7px] h-[4px] w-[7px] shrink-0 rounded-full bg-[#20b8e6]" />
      </div>
      <div className="flex pl-[68px] text-[#dfe3e6]">
        <button className="w-[24px] bg-[#0b96dc] font-bold text-white">編集</button>
        <button className="w-[25px] bg-[#47505a]">ミックス</button>
        <span className="w-[3px] bg-[#0b96dc]" />
      </div>
    </footer>
  );
}

export default function App() {
  return (
    <div className="flex min-h-screen flex-col overflow-hidden bg-[#0c0e10] font-['Roboto','Noto_Sans_CJK_JP',sans-serif] [font-feature-settings:'palt']">
      <WindowHeader />
      <MainToolbar />
      <main className="mt-[2px] flex flex-1">
        <div className="flex min-w-0 flex-1 flex-col">
          <Arrangement />
          <NoteEditor />
        </div>
        <div className="w-[3px] shrink-0" />
        <Browser />
      </main>
      <Transport />
    </div>
  );
}
